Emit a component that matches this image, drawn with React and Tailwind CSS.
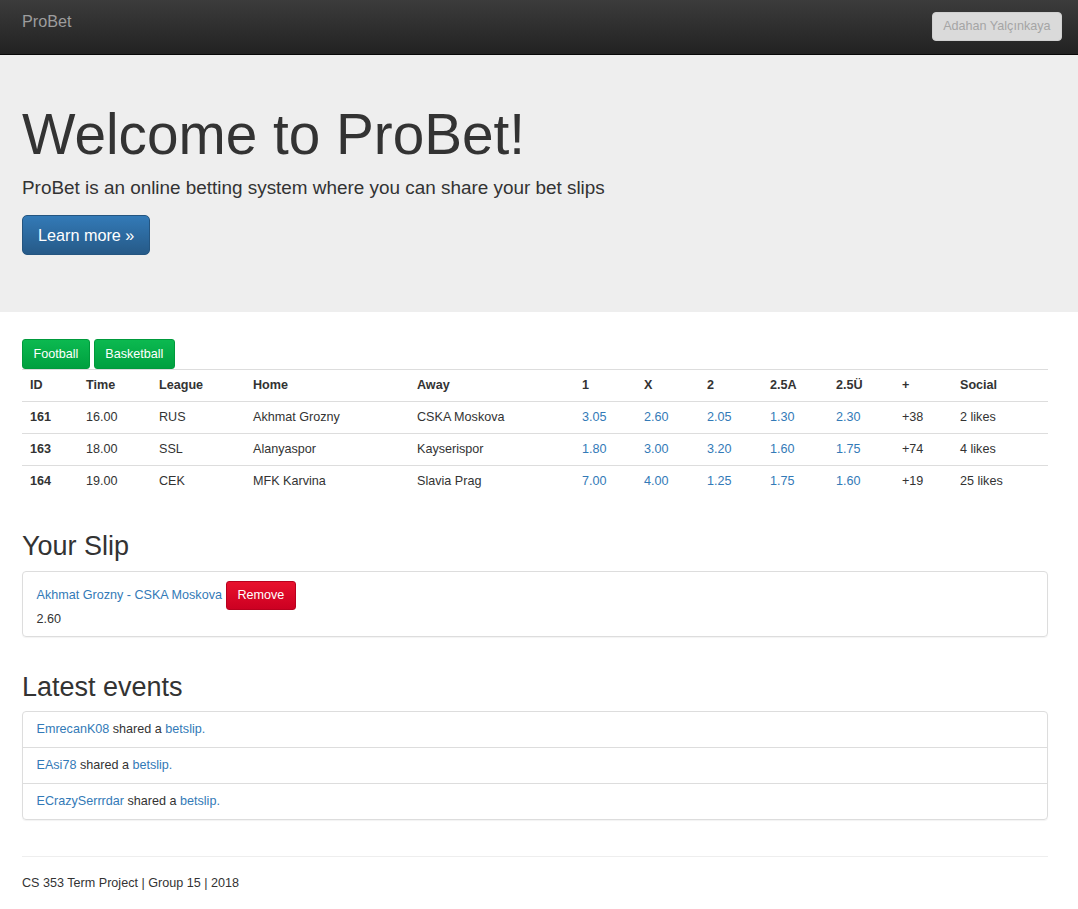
import React from "react";

const matches = [
    { id: 161, time: "16.00", league: "RUS", home: "Akhmat Grozny", away: "CSKA Moskova", odds: ["3.05", "2.60", "2.05", "1.30", "2.30"], more: "+38", social: "2 likes" },
    { id: 163, time: "18.00", league: "SSL", home: "Alanyaspor", away: "Kayserispor", odds: ["1.80", "3.00", "3.20", "1.60", "1.75"], more: "+74", social: "4 likes" },
    { id: 164, time: "19.00", league: "CEK", home: "MFK Karvina", away: "Slavia Prag", odds: ["7.00", "4.00", "1.25", "1.75", "1.60"], more: "+19", social: "25 likes" },
];

const events = ["EmrecanK08", "EAsi78", "ECrazySerrrdar"];

const App = () => {
    return (
        <div className="min-h-screen bg-white text-[12.6px] text-[#333] font-['Liberation_Sans',Arial,sans-serif]">
            {/* navbar */}
            <nav className="h-[55px] border-b border-[#080808] bg-gradient-to-b from-[#3c3c3c] to-[#222] flex items-start justify-between pl-[22px] pr-[16px]">
                <a className="text-[16.2px] leading-[20px] text-[#9d9d9d] mt-[11px]">ProBet</a>
                <button className="mt-[12px] h-[29px] px-[10.5px] rounded-[4px] bg-[#dadada] text-[#a5a5a5] text-[12.6px] border border-[#d0d0d0]">
                    Adahan Yalçınkaya
                </button>
            </nav>

            {/* jumbotron */}
            <div className="bg-[#eee] h-[257px] pl-[22px] pt-[49px]">
                <h1 className="text-[56.7px] leading-[62px] m-0">Welcome to ProBet!</h1>
                <p className="text-[18.9px] leading-[30px] mt-[7px]">ProBet is an online betting system where you can share your bet slips</p>
                <button className="mt-[12px] h-[40px] px-[15px] rounded-[5px] text-white text-[16.2px] bg-gradient-to-b from-[#337ab7] to-[#265a88] border border-[#245580]">
                    Learn more »
                </button>
            </div>

            <div className="pl-[22px] pr-[30px]">
                <div className="flex gap-[4px] mt-[27px]">
                    <button className="h-[30px] px-[10.5px] rounded-[3px] text-white bg-gradient-to-b from-[#0cb950] to-[#00a03f] border border-[#009a3c]">Football</button>
                    <button className="h-[30px] px-[10.5px] rounded-[3px] text-white bg-gradient-to-b from-[#0cb950] to-[#00a03f] border border-[#009a3c]">Basketball</button>
                </div>

                <table className="w-full table-fixed border-collapse">
                    <thead>
                        <tr className="h-[32px] border-t border-b border-[#ddd] text-left">
                            <th className="w-[56px] pl-[8px] font-bold">ID</th>
                            <th className="w-[73px] pl-[8px] font-bold">Time</th>
                            <th className="w-[94px] pl-[8px] font-bold">League</th>
                            <th className="w-[164px] pl-[8px] font-bold">Home</th>
                            <th className="w-[165px] pl-[8px] font-bold">Away</th>
                            <th className="w-[62px] pl-[8px] font-bold">1</th>
                            <th className="w-[63px] pl-[8px] font-bold">X</th>
                            <th className="w-[63px] pl-[8px] font-bold">2</th>
                            <th className="w-[66px] pl-[8px] font-bold">2.5A</th>
                            <th className="w-[66px] pl-[8px] font-bold">2.5Ü</th>
                            <th className="w-[58px] pl-[8px] font-bold">+</th>
                            <th className="pl-[8px] font-bold">Social</th>
                        </tr>
                    </thead>
                    <tbody>
                        {matches.map((m, i) => (
                            <tr key={m.id} className={"h-[32px] " + (i > 0 ? "border-t border-[#ddd]" : "")}>
                                <td className="pl-[8px] font-bold">{m.id}</td>
                                <td className="pl-[8px]">{m.time}</td>
                                <td className="pl-[8px]">{m.league}</td>
                                <td className="pl-[8px]">{m.home}</td>
                                <td className="pl-[8px]">{m.away}</td>
                                {m.odds.map((o, j) => (
                                    <td key={j} className="pl-[8px]"><a className="text-[#337ab7]">{o}</a></td>
                                ))}
                                <td className="pl-[8px]">{m.more}</td>
                                <td className="pl-[8px]">{m.social}</td>
                            </tr>
                        ))}
                    </tbody>
                </table>

                <h2 className="text-[27px] leading-[30px] mt-[33px]">Your Slip</h2>
                <div className="mt-[10px] border border-[#ddd] rounded-[4px] shadow-[0_1px_1px_rgba(0,0,0,0.05)] px-[13.5px] pt-[10px] pb-[8px]">
                    <div className="flex items-center h-[28px]">
                        <a className="text-[#337ab7]">Akhmat Grozny - CSKA Moskova</a>
                        <button className="ml-[4px] h-[29px] px-[10.5px] rounded-[3px] text-white bg-gradient-to-b from-[#e8112d] to-[#cc0022] border border-[#b8001e]">Remove</button>
                    </div>
                    <div className="leading-[18px]">2.60</div>
                </div>

                <h2 className="text-[27px] leading-[30px] mt-[35px]">Latest events</h2>
                <div className="mt-[9px] border border-[#ddd] rounded-[4px] shadow-[0_1px_1px_rgba(0,0,0,0.05)]">
                    {events.map((u, i) => (
                        <div key={u} className={"flex items-center px-[13.5px] " + (i > 0 ? "h-[36px] border-t border-[#ddd]" : "h-[35px]")}>
                            <a className="text-[#337ab7]">{u}</a>
                            <span>&nbsp;shared a&nbsp;</span>
                            <a className="text-[#337ab7]">betslip.</a>
                        </div>
                    ))}
                </div>

                <footer className="mt-[36px] border-t border-[#eee] pt-[17px] pb-[20px]">
                    <p className="leading-[19px]">CS 353 Term Project | Group 15 | 2018</p>
                </footer>
            </div>
        </div>
    );
};

export default App;
